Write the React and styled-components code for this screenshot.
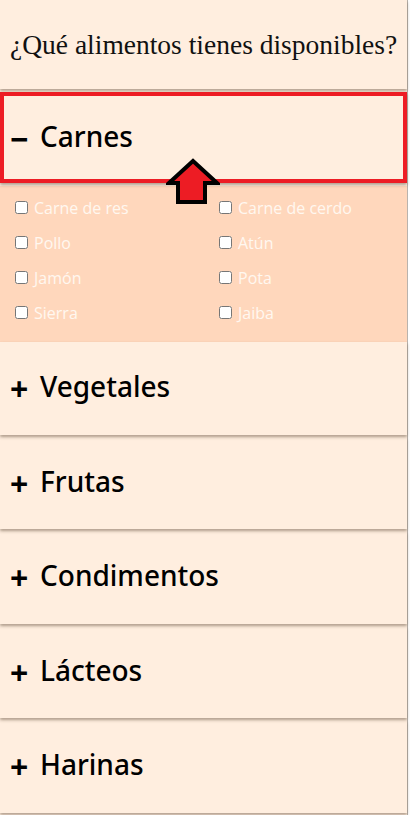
import React from 'react'
import styled, { createGlobalStyle } from 'styled-components'

const GlobalStyle = createGlobalStyle`
  body {
    margin: 0;
    background: #ffffff;
  }
`

const Page = styled.div`
  width: 407px;
  min-height: 815px;
  background: #ffeedf;
  border-right: 1px solid #b9b3ad;
  position: relative;
`

const Title = styled.h1`
  margin: 0 0 3px;
  height: 89px;
  display: flex;
  align-items: center;
  padding-left: 10px;
  font-family: "Liberation Serif", "Times New Roman", serif;
  font-weight: normal;
  font-size: 27.5px;
  color: #111;
  box-shadow: 0 2px 3px rgba(80, 60, 40, 0.45);
`

const Header = styled.div`
  position: relative;
  box-sizing: border-box;
  height: ${p => (p.open ? '91px' : '92.5px')};
  margin-bottom: ${p => (p.open ? '3px' : '2px')};
  padding: 0 0 4px 10px;
  display: flex;
  align-items: center;
  gap: 14px;
  font-family: "Noto Sans", "Open Sans", sans-serif;
  font-weight: 500;
  font-size: 28px;
  color: #000;
  box-shadow: 0 2px 3px rgba(80, 60, 40, 0.45);
  outline: ${p => (p.highlight ? '4px solid #ed1c24' : 'none')};
  outline-offset: -4px;
`

const Sign = styled.span`
  width: 16px;
  font-weight: bold;
  text-align: center;
  font-size: 32px;
  line-height: 1;
  margin-top: 6px;
`

const Panel = styled.div`
  background: #ffd7bc;
  padding: 4px 0 12px 15px;
  display: grid;
  grid-template-columns: 204px 1fr;
  grid-auto-rows: 35px;
`

const Item = styled.label`
  display: flex;
  align-items: center;
  gap: 6px;
  font-family: "Open Sans", "Noto Sans", sans-serif;
  font-size: 16px;
  color: #fff8f0;
  input {
    margin: 0;
    width: 13px;
    height: 13px;
  }
`

const Arrow = styled.svg`
  position: absolute;
  left: 166px;
  top: 158px;
  z-index: 2;
`

const carnes = ['Carne de res', 'Carne de cerdo', 'Pollo', 'Atún', 'Jamón', 'Pota', 'Sierra', 'Jaiba']
const closed = ['Vegetales', 'Frutas', 'Condimentos', 'Lácteos', 'Harinas']

const App = () => {
  return (
    <Page>
      <GlobalStyle />
      <Title>¿Qué alimentos tienes disponibles?</Title>
      <Header open highlight>
        <Sign>−</Sign>Carnes
      </Header>
      <Arrow width="54" height="48" viewBox="0 0 54 48">
        <path d="M27 3 L51 25 L39 25 L39 44 L12 44 L12 25 L3 25 Z" fill="#ed1c24" stroke="#000" strokeWidth="4" strokeLinejoin="miter" />
      </Arrow>
      <Panel>
        {carnes.map(c => (
          <Item key={c}>
            <input type="checkbox" />
            {c}
          </Item>
        ))}
      </Panel>
      {closed.map(name => (
        <Header key={name}>
          <Sign>+</Sign>{name}
        </Header>
      ))}
    </Page>
  )
}

export default App
